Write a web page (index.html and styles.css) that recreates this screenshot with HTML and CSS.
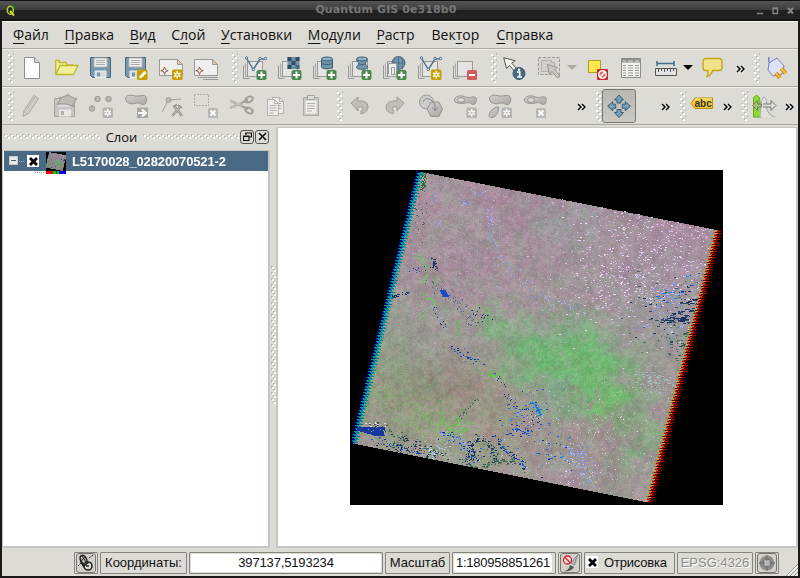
FILE: index.html
```html
<!DOCTYPE html>
<html lang="ru">
<head>
<meta charset="utf-8">
<title>Quantum GIS</title>
<link rel="stylesheet" href="styles.css">
</head>
<body>
<svg class="defs" width="0" height="0">
  <defs>
    <linearGradient id="gGray" x1="0" y1="0" x2="1" y2="1"><stop offset="0" stop-color="#d2d1ce"/><stop offset="1" stop-color="#a9a8a6"/></linearGradient>
    <symbol id="stack" viewBox="0 0 24 24" overflow="visible"><path d="M-.5 9.500v13h6" fill="none" stroke="#999"/><path d="M1.500 7.500v13h6" fill="none" stroke="#aaa"/><rect x="3.500" y="5.500" width="15" height="15" fill="#e4e4e2" stroke="#999"/></symbol>
    <symbol id="plus" viewBox="0 0 24 24" overflow="visible"><rect x="12.500" y="14" width="10" height="10" rx="2" fill="#4d8750"/><path d="M17.500 15.500v7M14 19h7" stroke="#fff" stroke-width="2"/></symbol>
    <symbol id="star" viewBox="0 0 24 24" overflow="visible"><rect x="12" y="13.500" width="10.500" height="10.500" rx="1.500" fill="#c6a000"/><path d="M17.200 15v7.500M14 17l6.500 3.700M14 20.700l6.500-3.700" stroke="#fff" stroke-width="1.500"/><circle cx="17.200" cy="18.800" r="1" fill="#c6a000"/></symbol>
    <symbol id="gstar" viewBox="0 0 24 24" overflow="visible"><rect x="12.500" y="13.500" width="10.500" height="10.500" rx="1.500" fill="#b5b4b2"/><path d="M17.700 15v7.500M14.500 17l6.500 3.700M14.500 20.700l6.500-3.700" stroke="#fff" stroke-width="1.500"/><circle cx="17.700" cy="18.800" r="1" fill="#b5b4b2"/></symbol>
    <symbol id="gx" viewBox="0 0 24 24" overflow="visible"><rect x="13" y="14" width="10" height="10" rx="1.500" fill="#b9b8b6"/><path d="M15.500 16.500l5 5m0-5l-5 5" stroke="#fff" stroke-width="1.800"/></symbol>
    <symbol id="vline" viewBox="0 0 24 24" overflow="visible"><path d="M3 3l6.300 10.500L16 3h5" fill="none" stroke="#4a6f8a" stroke-width="1.400"/><g fill="#e7eef2" stroke="#4a6f8a"><circle cx="2.500" cy="2" r="1.200"/><circle cx="9.300" cy="13.500" r="1.200"/><circle cx="16" cy="2.500" r="1.200"/><circle cx="21.500" cy="2.500" r="1.200"/></g></symbol>
    <symbol id="floppy" viewBox="0 0 24 24" overflow="visible"><path d="M.5 1.500h20v20h-18l-2-2z" fill="#7898ae" stroke="#4b687b"/><path d="M4 2h13v9H4z" fill="#f0f0ee" stroke="#b5b5b3"/><path d="M6 4.500h9M6 6.500h9M6 8.500h9" stroke="#aaa"/><path d="M5 15h11v6.500H5z" fill="#d5d9dc" stroke="#edf1f3"/><path d="M7 16.500h3v4H7z" fill="#7898ae"/></symbol>
    <symbol id="blob" viewBox="0 0 24 24" overflow="visible"><path d="M.5 5C0 2 4 .5 8 1.500s6 .5 9 0c5-.5 5.500 3 4 7-1 3-4 2.500-6 1s-5 .5-8 .3C3 9.500 1 8 .5 5z" fill="url(#gGray)" stroke="#969593"/></symbol>
    <symbol id="ring" viewBox="0 0 24 24" overflow="visible"><path d="M.5 6C1 2 6 1 10 2.500s5 1 8 .5c5-.8 5 2 3.500 6-1 2-3 2-5 .2s-6 .6-9 .3-7-.5-7-3.500z" fill="url(#gGray)" stroke="#969593"/><ellipse cx="7" cy="6" rx="3.500" ry="2.300" fill="#dcdbd6" stroke="#969593"/></symbol>
    <symbol id="more" viewBox="0 0 9 8"><path d="M1 1l3 3-3 3M5 1l3 3-3 3" fill="none" stroke="#fff" stroke-width="3" opacity=".6"/><path d="M1 1l3 3-3 3M5 1l3 3-3 3" fill="none" stroke="#000" stroke-width="1.500"/></symbol>
    <symbol id="page" viewBox="0 0 16 18" overflow="visible"><path d="M.5 .5h7l4 4v12H.5z" fill="#eeedeb" stroke="#b0afad"/><path d="M7.500 .5v4h4M2.500 6.500h7M2.500 9h7M2.500 11.500h7M2.500 14h4" fill="none" stroke="#b0afad"/></symbol>
  </defs>
</svg>
<div class="window">
  <header class="titlebar">
    <svg class="app-icon" width="11" height="14" viewBox="0 0 11 14"><path d="M5 3L9.500 0v3L7 5z" fill="#156b25"/><ellipse cx="4.300" cy="6.300" rx="3" ry="4" fill="#143816" stroke="#b8c32b" stroke-width="1.600"/><path d="M4 7l4 4.500" stroke="#d5d535" stroke-width="2"/></svg>
    <h1>Quantum GIS 0e318b0</h1>
    <svg class="win-buttons" width="38" height="8" viewBox="0 0 38 8"><path d="M0 6.500h6M16 1.500h4.500v5H16zM15.500 1h5.500" fill="none" stroke="#858585" stroke-width="1.400"/><path d="M31 1l5 5.500m0-5.500l-5 5.500" stroke="#858585" stroke-width="2"/></svg>
  </header>
  <nav class="menu">
    <a><u>Ф</u>айл</a><a><u>П</u>равка</a><a><u>В</u>ид</a><a>С<u>л</u>ой</a><a><u>У</u>становки</a><a><u>М</u>одули</a><a><u>Р</u>астр</a><a>Век<u>т</u>ор</a><a><u>С</u>правка</a>
  </nav>
  <div class="toolbar">
    <i class="grip"></i>
    <span class="tool"><svg><path d="M4.500 1.500h10l5 5v16h-15z" fill="#fcfcfc" stroke="#8e8e8c"/><path d="M14.500 1.500v5h5" fill="#dcdcda" stroke="#8e8e8c"/></svg></span>
    <span class="tool"><svg><path d="M.7 18.500v-14h3.500v2h7l.5 2.500h6v1.500" fill="#eded9a" stroke="#bdb82a" stroke-width="1.300"/><path d="M1 18.500l4-9h18l-4.500 9z" fill="#f0ef9e" stroke="#bdb82a" stroke-width="1.300"/></svg></span>
    <span class="tool"><svg><use href="#floppy"/></svg></span>
    <span class="tool"><svg><use href="#floppy"/><rect x="12" y="13.500" width="10.500" height="10.500" rx="1.500" fill="#c6a000"/><path d="M14 22.500l1-3 4.500-4.500 2 2-4.500 4.500z" fill="#fff"/></svg></span>
    <span class="tool"><svg><path d="M-.5 3.500h18l5 5v11h-23z" fill="#efefed" stroke="#999"/><path d="M17.500 3.500v5h5z" fill="#e7c7a6" stroke="#999"/><path d="M4.500 11l1 2.700 2.700 1-2.700 1-1 2.700-1-2.700-2.700-1 2.700-1z" fill="#fff" stroke="#995640"/><use href="#star"/></svg></span>
    <span class="tool"><svg><path d="M3 21.500h20M8 23.500h15" stroke="#999"/><path d="M-.5 3.500h18l5 5v11h-23z" fill="#efefed" stroke="#999"/><path d="M17.500 3.500v5h5z" fill="#e7c7a6" stroke="#999"/><path d="M4.500 11l1 2.700 2.700 1-2.700 1-1 2.700-1-2.700-2.700-1 2.700-1z" fill="#fff" stroke="#995640"/></svg></span>
    <i class="grip"></i>
    <span class="tool"><svg><use href="#stack"/><use href="#vline"/><use href="#plus"/></svg></span>
    <span class="tool"><svg><use href="#stack"/><path d="M8.500 1h12v12h-12z" fill="#6e94ab"/><path d="M8.500 1h4v4h-4zM16.500 1h4v4h-4zM12.500 5h4v4h-4zM8.500 9h4v4h-4z" fill="#2f4d63"/><path d="M16.500 9h4v4h-4z" fill="#47687e"/><use href="#plus"/></svg></span>
    <span class="tool"><svg><use href="#stack"/><path d="M7.500 3.500v7.500c0 2.500 11 2.500 11 0V3.500" fill="#6f94ab" stroke="#3f6074"/><ellipse cx="13" cy="3" rx="5.500" ry="2" fill="#8fb0c4" stroke="#3f6074"/><path d="M7.500 7c1 2 10 2 11 0" fill="none" stroke="#3f6074"/><use href="#plus"/></svg></span>
    <span class="tool"><svg><use href="#stack"/><path d="M7.500 3.500c0 2 2 2 2 4s-2 2-2 4c1 2.500 11 2.500 11 0 0-2-2-2-2-4s2-2 2-4" fill="#6f94ab" stroke="#3f6074"/><ellipse cx="13" cy="3" rx="5.500" ry="2" fill="#8fb0c4" stroke="#3f6074"/><path d="M9 7c1 2 7 2 8 0" fill="none" stroke="#3f6074"/><use href="#plus"/></svg></span>
    <span class="tool"><svg><use href="#stack"/><circle cx="14.500" cy="7" r="6.500" fill="#6f94ab" stroke="#4a6c80"/><path d="M8 7h13M14.500 .5v13M11.500 1.500c-2 4-2 7 0 11M17.500 1.500c2 4 2 7 0 11" fill="none" stroke="#4a6c80" stroke-width=".8"/><path d="M4.500 18.500v-11h8v11h-5v-7h3v7" fill="#eeeeec" stroke="#999"/><use href="#plus"/></svg></span>
    <span class="tool"><svg><use href="#stack"/><use href="#vline"/><use href="#star"/></svg></span>
    <span class="tool"><svg><use href="#stack"/><rect x="13" y="14" width="10" height="10" rx="1.500" fill="#d35c5c"/><path d="M15 19h6" stroke="#fff" stroke-width="2"/></svg></span>
    <i class="grip"></i>
    <span class="tool"><svg><path d="M.7 1.700l11.500 3-3.500 2.500 6 6.500-2.300 2.300-6-6.500L3.500 12.500z" fill="#f2f2f0" stroke="#555"/><circle cx="16" cy="17.500" r="6" fill="#486a84" stroke="#38546a"/><path d="M14 16h2.700v5M14 21h5" fill="none" stroke="#fff" stroke-width="1.700"/><circle cx="16" cy="13.800" r="1.200" fill="#fff"/></svg></span>
    <span class="tool"><svg><rect x=".5" y="1.500" width="21" height="17" fill="#d7d6d3" stroke="#999" stroke-dasharray="3 1.500"/><path d="M3.500 4.500h10v2h3v9h-13z" fill="#d1d0cc" stroke="#b1b0ae"/><path d="M9.500 8.500l10 3-3 2 5.500 6.500-2.500 2-5.500-6.500-2.500 3z" fill="#c9c8c6" stroke="#959492"/></svg></span>
    <span class="drop drop-off"></span>
    <span class="tool"><svg><path d="M2.500 4.500h12v12h-12z" fill="#ffe64e" stroke="#ad9b24"/><rect x="11" y="13" width="11" height="11" rx="1" fill="#c7282d"/><circle cx="16.500" cy="18.500" r="3.800" fill="#e26b6e" stroke="#fff" stroke-width="1.500"/><path d="M14 21l5-5" stroke="#fff" stroke-width="1.500"/></svg></span>
    <span class="tool"><svg><path d="M.5 2.500h19v19H.5z" fill="#f1f1ef" stroke="#8c8c8a"/><path d="M1 3h18v3.500H1z" fill="#8f8f8d"/><path d="M2 5h3m2 0h5m2 0h4" stroke="#ddd"/><path d="M2 9.500h3m2 0h5m2 0h4M2 12h3m2 0h5m2 0h4M2 14.500h3m2 0h5m2 0h4M2 17h3m2 0h5m2 0h4M2 19.500h3m2 0h5m2 0h4" stroke="#999"/></svg></span>
    <span class="tool"><svg><path d="M1 7.500h17M1 5v5M18 5v5" stroke="#3f6c88" stroke-width="1.500" fill="none"/><path d="M-.5 12.500h21v7h-21z" fill="#e4e4e2" stroke="#555"/><path d="M2.500 13v3m3-3v2m3-2v3m3-3v2m3-2v3m3-3v2" stroke="#555"/></svg></span>
    <span class="drop drop-on"></span>
    <span class="tool"><svg><path d="M4 2.500h14q3 0 3 3v6q0 3-3 3h-6.500Q10 20 6 20.500q1.500-2 1-6H5q-3 0-3-3v-6q0-3 3-3z" fill="#f0e289" stroke="#bfa317" stroke-width="1.300"/></svg></span>
    <span class="more more-a"><svg><use href="#more"/></svg></span>
    <i class="grip grip-a"></i>
    <span class="tool"><svg><path d="M4 8q-2-3-1-7" fill="none" stroke="#7785cd" stroke-width="1.500"/><path d="M3 7l8-5 7 8-2 8-9 2-5-6z" fill="#dfe2fb" stroke="#7380bd"/><path d="M10 17l4 5M15.500 12.500l4 5" stroke="#dc8900" stroke-width="4"/><path d="M10 17l4 5M15.500 12.500l4 5" stroke="#ffc43e" stroke-width="2"/></svg></span>
  </div>
  <div class="toolbar">
    <i class="grip"></i>
    <span class="tool"><svg><path d="M3 22.500l1-6L14 1.500l4.500 3-10 15z" fill="#cecdca" stroke="#aaa9a7"/><path d="M4 17l4 3M7 15l8-12" stroke="#b3b2b0"/></svg></span>
    <span class="tool"><svg><path d="M-.5 4.500h20v18h-20z" fill="#c7c6c4" stroke="#a3a2a0"/><path d="M3 5h12v8H3z" fill="#dedddb"/><path d="M4 15.500h12v7H4z" fill="#e8e7e5"/><path d="M6 17h3v4H6z" fill="#b0afad"/><path d="M3 10l2-6 8-3 8 4-3 7q-7-3-15-2z" fill="#bcbbb8" stroke="#969593"/><g fill="#ccc" stroke="#969593" stroke-width=".8"><circle cx="3" cy="10" r="1"/><circle cx="5" cy="4" r="1"/><circle cx="13" cy="1" r="1"/><circle cx="21" cy="5" r="1"/><circle cx="18" cy="12" r="1"/></g></svg></span>
    <span class="tool"><svg><g fill="#b9b8b6" stroke="#999896"><circle cx="7.500" cy="5" r="2.700"/><circle cx="18.500" cy="5" r="2.700"/><circle cx="2" cy="14.500" r="2.700"/></g><use href="#gstar"/></svg></span>
    <span class="tool"><svg><use href="#blob"/><rect x="12" y="13.500" width="11" height="10.500" fill="#a8a7a5"/><path d="M13 19h6M17 15.500l4 3.500-4 3.500" fill="none" stroke="#fff" stroke-width="2"/></svg></span>
    <span class="tool"><svg><path d="M2 18L8.500 6 21 5" fill="none" stroke="#a1a09e"/><circle cx="8.500" cy="6" r="2.500" fill="#b9b8b6" stroke="#a1a09e"/><path d="M12 22l8-9M14 12l8 10" stroke="#8f8e8c" stroke-width="2.600"/><path d="M12 22l8-9M14 12l8 10" stroke="#c7c6c4" stroke-width="1"/><path d="M13 13l4-2.500M18 11l4 3" stroke="#999" stroke-width="2"/></svg></span>
    <span class="tool"><svg><rect x="-.5" y=".5" width="14" height="11" fill="none" stroke="#8d8c8a" stroke-dasharray="1.200 1.800"/><use href="#gx"/></svg></span>
    <span class="tool"><svg><path d="M0 6.500l18 8.500M0 14l18-8" stroke="#a09f9d" stroke-width="2"/><path d="M0 6.500l12 5.500M0 14l12-5.500" stroke="#ccc"/><g fill="none" stroke="#9d9c9a" stroke-width="1.800"><ellipse cx="19" cy="5.500" rx="4" ry="2.500" transform="rotate(-30 19 5.500)"/><ellipse cx="19" cy="16.500" rx="4" ry="2.500" transform="rotate(30 19 16.500)"/></g></svg></span>
    <span class="tool"><svg><use href="#page" x="7" y="3" width="16" height="18"/><use href="#page" x="2" y="5" width="16" height="18"/></svg></span>
    <span class="tool"><svg><path d="M3.500 3.500h15v18h-15z" fill="#c8c7c4" stroke="#a9a8a6"/><path d="M5.500 6.500h11v13h-11z" fill="#f0efed"/><path d="M7.500 1.500h7v4h-7z" fill="#dddcda" stroke="#a3a2a0"/><path d="M7 9.500h8M7 12h8M7 14.500h8M7 17h5" stroke="#b0afad"/></svg></span>
    <i class="grip"></i>
    <span class="tool"><svg><path d="M2 9l7-6v4q10-1 10 6 0 5-7 7-1-3 2-5 0-3-5-2v4z" fill="#bfbebb" stroke="#9c9b99"/></svg></span>
    <span class="tool"><svg><path d="M20 9l-7-6v4q-10-1-11 6 0 5 7 7 2-3-1-5 0-3 5-2v4z" fill="#bfbebb" stroke="#9c9b99"/></svg></span>
    <span class="tool"><svg><circle cx="7.500" cy="8" r="7" fill="#ccc" stroke="#999896"/><path d="M8 15l4-7h8l3.500 7-3.500 7.500h-8z" fill="url(#gGray)" stroke="#959492"/><path d="M4 8q2-5 7-2.500t5 6v5m-2.500-3l2.500 3.500 2.500-3.500" fill="none" stroke="#888"/></svg></span>
    <span class="tool"><svg><use href="#ring"/><use href="#gstar"/></svg></span>
    <span class="tool"><svg><use href="#blob"/><path d="M0 21q1-4 4-6 4-3 6-2-1 8-5 10-5 2-5-2z" fill="url(#gGray)" stroke="#969593"/><use href="#gstar"/></svg></span>
    <span class="tool"><svg><use href="#ring"/><use href="#gx" x="-1"/></svg></span>
    <span class="more more-b"><svg><use href="#more"/></svg></span>
    <i class="grip grip-b"></i>
    <span class="tool pressed"><svg viewBox="0 0 24 24"><g fill="#789fb9" stroke="#365d77" stroke-linejoin="round"><path d="M12 1l4.500 5H14v3h-4V6H7.500z"/><path d="M12 23.500l4.500-5H14v-3h-4v3H7.500z"/><path d="M.7 12.200l5-4.500v2.500h3v4h-3v2.500z"/><path d="M23.300 12.200l-5-4.500v2.500h-3v4h3v2.500z"/></g></svg></span>
    <span class="more more-c"><svg><use href="#more"/></svg></span>
    <i class="grip grip-b"></i>
    <span class="tool tag-tool"><svg><path d="M-1 9.500l4-5.500h17.500v10.500H3z" fill="#f3cc33" stroke="#ba9200"/><path d="M3 5h17" stroke="#fff09a"/><text x="2.500" y="12.500" class="tag">abc</text></svg></span>
    <span class="more more-d"><svg><use href="#more"/></svg></span>
    <i class="grip grip-b"></i>
    <span class="tool"><svg><path d="M-.5 23V4q3-5 6 0l2 19z" fill="#8adc2c" stroke="#62a923"/><path d="M12 14q4 8 10 9H7z" fill="#8adc2c"/><path d="M6 23q1-21 4-20t3 13q2 5 7 7" fill="#e0e0de" stroke="#aaa"/><path d="M-1.500 11.500l5-5v3.500h4v3h-4v3.500z" fill="#9fca6a" stroke="#777"/><path d="M9 10h8V6.500l5 5-5 5V13H9" fill="#dededc" stroke="#777"/></svg></span>
    <span class="more more-e"><svg><use href="#more"/></svg></span>
  </div>
  <main class="workspace">
    <aside class="dock">
      <div class="dock-title"><i class="hgrip"></i><h2>Слои</h2><i class="hgrip"></i>
        <span class="dock-button"><svg width="9" height="9" viewBox="0 0 9 9"><path d="M3 3V1h5.500v4H6M2 1h7M.5 4h5.500v4.500H.5zM0 4.500h6" fill="none" stroke="#111" stroke-width="1.200"/></svg></span>
        <span class="dock-button"><svg width="9" height="9" viewBox="0 0 9 9"><path d="M1 1l7 7m0-7L1 8" stroke="#111" stroke-width="1.700"/></svg></span>
      </div>
      <div class="tree">
        <div class="layer"><i class="expander"></i><i class="branch"></i><span class="check"><svg width="9" height="9" viewBox="0 0 9 9"><path d="M1 1l7 7m0-7L1 8" stroke="#000" stroke-width="2.800"/></svg></span><canvas class="thumb" id="thumb" width="20" height="19"></canvas><b>L5170028_02820070521-2</b></div>
        <div class="bands"><i class="band-line"></i><i class="band red"></i><i class="band green"></i><i class="band blue"></i></div>
      </div>
    </aside>
    <div class="splitter"><i class="vgrip"></i></div>
    <section class="view"><canvas id="map" width="373" height="335"></canvas></section>
  </main>
  <footer class="status">
    <div class="cell button"><span><svg width="18" height="18" viewBox="0 0 18 18"><path d="M1 12L5 8M12 4l4-3" stroke="#222" stroke-dasharray="2 1"/><ellipse cx="6.500" cy="5.500" rx="3" ry="4.500" transform="rotate(-30 6.500 5.500)" fill="#bbb" stroke="#222" stroke-width="1.500"/><path d="M3 8l5-5M5 2l4 6" stroke="#222"/><circle cx="11" cy="12" r="4" fill="#ddd" stroke="#222" stroke-width="1.600"/><path d="M7 12l5-4M9 12h3M4 8l3 5" stroke="#222" stroke-width="1.600"/></svg></span></div>
    <div class="cell coord-label">Координаты:</div>
    <div class="cell coord"><span class="field">397137,5193234</span></div>
    <div class="cell scale-label">Масштаб</div>
    <div class="cell scale"><span class="field">1:180958851261</span></div>
    <div class="cell button"><span><svg width="18" height="18" viewBox="0 0 18 18"><path d="M16.500 1l-3 10-3.500-2z" fill="#bbb" stroke="#888"/><path d="M2 17q6 0 7-6l4 2q-2 5-11 4z" fill="#555"/><circle cx="6.500" cy="6" r="4" fill="#f4dede" stroke="#d62028" stroke-width="1.300"/><path d="M4 3.500l5 5" stroke="#d62028" stroke-width="1.300"/></svg></span></div>
    <div class="cell render"><span class="check"><svg width="9" height="9" viewBox="0 0 9 9"><path d="M1 1l7 7m0-7L1 8" stroke="#000" stroke-width="2.800"/></svg></span>Отрисовка</div>
    <div class="cell epsg">EPSG:4326</div>
    <div class="cell button"><span><svg width="18" height="18" viewBox="0 0 18 18"><circle cx="9" cy="9" r="7.500" fill="#8d8d8b"/><circle cx="9" cy="9" r="4" fill="#aaa" stroke="#777" stroke-width="1.500"/><path d="M9 1v16M1 9h16" stroke="#747472" stroke-width="1.300"/><path d="M6.500 6.500h5v5h-5z" fill="#b8b8b6"/></svg></span></div>
    <svg class="resize" width="12" height="12" viewBox="0 0 12 12"><path d="M0 12L12 0M4 12l8-8M8 12l4-4" stroke="#999"/><path d="M1.500 12L12 1.500M5.500 12L12 5.500M9.500 12l2.500-2.500" stroke="#fff"/></svg>
  </footer>
</div>
<script src="scene.js"></script>
</body>
</html>
```

FILE: styles.css
```css
* { box-sizing: border-box; }
body { margin: 0; background: #1a1718; color: #111; font: 14px "Open Sans", "Noto Sans", sans-serif; overflow: hidden; }
h1, h2 { margin: 0; }
i { display: block; flex: none; }
.defs { position: absolute; }
.window { width: 800px; height: 578px; display: flex; flex-direction: column; border: solid #1a1718; border-width: 0 2px 2px; background: #dcdbd5; }
.titlebar { height: 21px; flex: none; display: flex; align-items: center; margin: 0 -2px; background: linear-gradient(#111 0 1px, #545455 1px, #3c3c3d 10px, #202020 10px, #222 19px, #141414 19px); }
.app-icon { margin-left: 6px; }
.titlebar h1 { flex: 1; font: bold 11px "DejaVu Sans", sans-serif; letter-spacing: .1px; color: #777; text-align: center; padding: 0 2px 2px 0; }
.win-buttons { margin-right: 5px; }
.menu { height: 28px; flex: none; display: flex; gap: 15.600px; padding: 3px 0 0 11px; border-bottom: 1px solid #aaa9a4; border-top: 1px solid #f3f2ee; line-height: 19px; font-size: 14px; color: #111; }
.menu a:nth-child(8), .menu a:nth-child(9) { margin-left: 1.500px; }
.menu u { text-decoration-thickness: 1px; text-underline-offset: 3px; text-decoration-skip-ink: none; }
.toolbar { height: 38px; flex: none; display: flex; align-items: center; border-top: 1px solid #eeede9; border-bottom: 1px solid #aaa9a4; }
.grip { width: 6px; height: 30px; margin-left: 8px; background: conic-gradient(from 270deg at 2px 2px, #fff 90deg, transparent 0) 0 1px / 6px 6px, conic-gradient(from 270deg at 2px 2px, #fff 90deg, transparent 0) 3px 4px / 6px 6px, conic-gradient(from 270deg at 2px 2px, #bbbab6 90deg, transparent 0) -1px 0 / 6px 6px, conic-gradient(from 270deg at 2px 2px, #bbbab6 90deg, transparent 0) 2px 3px / 6px 6px; }
.toolbar > .grip:first-child { margin-left: 6px; }
.toolbar > .grip-b { margin-left: 10px; }
.toolbar > .grip-a { margin-left: 9px; }
.tool { width: 35px; height: 34px; flex: none; padding: 5px 0 0 6px; }
.tool svg { display: block; width: 24px; height: 24px; overflow: visible; }
.drop { flex: none; width: 13px; height: 6px; }
.drop::before { content: ""; display: block; width: 0; border: 5px solid transparent; border-bottom: 0; }
.drop-off::before { border-top-color: #aaa9a7; }
.drop-on { width: 10px; }
.drop-on::before { border-top-color: #000; margin-left: -2px; }
.more { flex: none; width: 9px; }
.more svg { display: block; width: 9px; height: 8px; margin-top: 1px; }
.more-a { margin-left: 6px; }
.more-b { margin-left: 24px; }
.more-c { margin-left: 25px; }
.more-d { margin-left: 2px; }
.more-e { margin-left: 2px; }
.pressed { width: 34px; padding: 4px; border: 1px solid #777674; border-radius: 3px; background: linear-gradient(#b8b7b2, #cac9c4); }
.tag { font: bold 10px "Liberation Sans", sans-serif; fill: #333; }
.workspace { flex: 1; min-height: 0; display: flex; padding-top: 2px; }
.dock { width: 268px; flex: none; display: flex; flex-direction: column; }
.dock-title { height: 23px; flex: none; display: flex; align-items: center; padding: 0 0 4px 2px; }
.dock-title h2 { font-size: 13px; font-weight: 400; width: 43px; text-align: center; line-height: 18px; }
.hgrip { width: 96px; height: 6px; background: conic-gradient(from 270deg at 2px 2px, #fff 90deg, transparent 0) 1px 1px / 6px 6px, conic-gradient(from 270deg at 2px 2px, #fff 90deg, transparent 0) 4px 3px / 6px 6px, conic-gradient(from 270deg at 2px 2px, #bbbab6 90deg, transparent 0) 0 0 / 6px 6px, conic-gradient(from 270deg at 2px 2px, #bbbab6 90deg, transparent 0) 3px 2px / 6px 6px; }
.dock-button { width: 14px; height: 14px; margin-left: 1px; border: 1px solid #555; border-radius: 3px; display: grid; place-items: center; }
.tree { flex: 1; background: #fff; border: solid #c6c5c1; border-width: 1px 2px 2px 1px; }
.layer { height: 20px; margin-left: 1px; display: flex; align-items: center; background: #4a6984; color: #fff; font: 13px "Liberation Sans", sans-serif; }
.layer b { letter-spacing: -.14px; margin-left: 6px; }
.expander { width: 9px; height: 9px; margin: 0 0 2px 5px; background: linear-gradient(#555, #555) center / 5px 1px no-repeat, #e9e9e7; border: 1px solid #c8c7c3; }
.branch { width: 5px; height: 1px; margin-left: 1px; background: repeating-linear-gradient(90deg, #aaa 0 1px, transparent 1px 2px); }
.check { display: grid; place-items: center; flex: none; width: 12px; height: 12px; background: #fff; }
.layer .check { margin-left: 3px; }
.thumb { margin-left: 7px; flex: none; }
.bands { height: 4px; display: flex; padding-left: 32px; }
.band { height: 3px; width: 7px; }
.band-line { width: 9px; margin: 1px 2px 0 0; height: 1px; background: repeating-linear-gradient(90deg, #999 0 1px, transparent 1px 2px); }
.red { background: #f00; }
.green { background: linear-gradient(90deg, #0c0 0 3px, #040 3px 4px, #0c0 4px); width: 6px; }
.blue { background: #00f; }
.splitter { width: 6px; display: flex; justify-content: center; padding-top: 139px; }
.vgrip { width: 6px; height: 138px; background: conic-gradient(from 270deg at 2px 2px, #fff 90deg, transparent 0) 2px 1px / 6px 6px, conic-gradient(from 270deg at 2px 2px, #fff 90deg, transparent 0) 4px 4px / 6px 6px, conic-gradient(from 270deg at 2px 2px, #bbbab6 90deg, transparent 0) 1px 0 / 6px 6px, conic-gradient(from 270deg at 2px 2px, #bbbab6 90deg, transparent 0) 3px 3px / 6px 6px; }
.view { flex: 1; display: grid; place-items: center; padding-right: 2px; background: #fff; border: solid #c6c5c1; border-width: 1px 2px 2px; }
.view canvas { display: block; }
.status { height: 28px; flex: none; display: flex; gap: 2px; padding: 4px 0 2px 72px; font: 13px "Liberation Sans", sans-serif; }
.cell { height: 22px; flex: none; border: 1px solid #85847f; border-radius: 1px; display: flex; align-items: center; justify-content: center; white-space: nowrap; padding-bottom: 1px; }
.button { width: 24px; padding: 0; }
.button span { width: 20px; height: 20px; border: 1px solid #777672; border-radius: 3px; display: grid; place-items: center; background: #d2d1cb; }
.coord-label { width: 87px; }
.coord { width: 194px; padding: 0 1px; letter-spacing: -.15px; }
.field { flex: 1; height: 18px; line-height: 18px; text-align: center; background: #fff; border-radius: 2px; overflow: hidden; }
.scale-label { width: 65px; }
.scale { width: 104px; padding: 0 3px 0 1px; letter-spacing: -.25px; }
.render { width: 91px; gap: 6px; justify-content: flex-start; padding: 0 0 2px 1px; letter-spacing: -.2px; }
.epsg { width: 76px; color: #8d8c88; text-shadow: 1px 1px #fff; }
.resize { margin: 12px 0 0 auto; flex: none; }
```

FILE: scene.js
```javascript
const map = document.getElementById('map');
const ctx = map.getContext('2d');
const W = map.width, H = map.height;
let seed = 5170028;
const rnd = () => {
  seed = (seed + 0x6D2B79F5) | 0;
  let t = Math.imul(seed ^ (seed >>> 15), 1 | seed);
  t = (t + Math.imul(t ^ (t >>> 7), 61 | t)) ^ t;
  return ((t ^ (t >>> 14)) >>> 0) / 4294967296;
};

// Smooth value noise on a lattice of the given cell size.
function noise(size) {
  const cols = Math.ceil(W / size) + 2, rows = Math.ceil(H / size) + 2;
  const grid = Array.from({ length: cols * rows }, () => rnd() * 2 - 1);
  return (x, y) => {
    const gx = x / size, gy = y / size, ix = Math.floor(gx), iy = Math.floor(gy);
    const s = v => v * v * (3 - 2 * v), fx = s(gx - ix), fy = s(gy - iy), k = iy * cols + ix;
    const a = grid[k] + (grid[k + 1] - grid[k]) * fx;
    const b = grid[k + cols] + (grid[k + cols + 1] - grid[k + cols]) * fx;
    return a + (b - a) * fy;
  };
}
const n3 = noise(3), n8 = noise(8), n20 = noise(20), h5 = noise(5), h14 = noise(14), h35 = noise(35);
const wxa = noise(16), wya = noise(16), wxb = noise(5), wyb = noise(5);

// Tint regions: x, y, radius x, radius y, colour, strength.
const tints = [
  [225, 30, 150, 70, [164, 142, 156], .8], [100, 75, 70, 90, [162, 143, 153], .7],
  [320, 95, 60, 50, [164, 144, 162], .7], [210, 55, 24, 14, [151, 156, 156], .6],
  [240, 48, 14, 10, [152, 163, 167], .5], [330, 150, 40, 28, [152, 154, 164], .6],
  [45, 180, 40, 45, [145, 152, 139], .8], [50, 225, 60, 45, [143, 155, 125], .9],
  [120, 215, 45, 32, [153, 139, 129], .9], [100, 255, 45, 25, [143, 160, 120], .7],
  [205, 182, 52, 30, [116, 178, 120], 1.1], [236, 205, 45, 33, [114, 186, 116], 1.2],
  [262, 238, 32, 16, [112, 192, 108], 1.1], [282, 255, 14, 10, [122, 180, 115], .8],
  [275, 285, 18, 45, [138, 160, 133], .8],
  [212, 220, 22, 14, [126, 163, 145], .7], [165, 205, 14, 14, [134, 165, 130], .6],
  [143, 156, 12, 12, [124, 176, 124], .9], [235, 224, 9, 6, [154, 142, 134], .8],
  [218, 192, 10, 5, [150, 150, 138], .6],
  [305, 218, 25, 30, [154, 147, 146], .7], [235, 270, 40, 18, [160, 148, 143], .7],
  [250, 295, 35, 22, [158, 147, 147], .6], [290, 278, 10, 16, [125, 173, 125], .6],
  [190, 275, 50, 30, [162, 153, 149], .6], [120, 285, 50, 18, [148, 159, 135], .7],
  [150, 255, 28, 22, [160, 148, 135], .7]
];
const img = ctx.createImageData(W, H), d = img.data;
const put = (x, y, c) => {
  x |= 0; y |= 0;
  if (x < 0 || y < 0 || x >= W || y >= H) return;
  const k = (y * W + x) * 4;
  d[k] = c[0]; d[k + 1] = c[1]; d[k + 2] = c[2]; d[k + 3] = 255;
};
const leftAt = y => 65.5 - (y - 1) * .243;
const rightAt = y => 370 - (y - 60) * .2535;
const topAt = x => 1 + (x - 68) * .196;
const bottomAt = x => 272.500 + x * .2;
const inside = (x, y) => x > leftAt(y) + 7 && x < rightAt(y) - 5 && y > topAt(x) && y < bottomAt(x);

for (let y = 0; y < H; y++) {
  for (let x = 0; x < W; x++) {
    const jag = (y % 3) * 1.5, l = leftAt(y) - 1 + jag, r = rightAt(y) + 2 - jag;
    let c = [0, 0, 0];
    if (y > topAt(x) && y < bottomAt(x)) {
      if (x >= l && x < l + 2) c = [0, 0, y % 3 ? 165 : 50];
      else if (x >= l + 2 && x < l + 6) c = y % 2 ? [0, 160, 160] : [0, 130, 130];
      else if (x >= l + 6 && x < r - 6) {
        let r0 = 162, g0 = 151, b0 = 153;
        const wx = x + wxa(x, y) * 16 + wxb(x, y) * 9, wy = y + wya(x, y) * 12 + wyb(x, y) * 8;
        for (const [cx, cy, rx, ry, t, s] of tints) {
          const q = ((wx - cx) / rx) ** 2 + ((wy - cy) / ry) ** 2;
          if (q > 5) continue;
          const a = Math.min(1, Math.exp(-q) * s);
          r0 += (t[0] - r0) * a; g0 += (t[1] - g0) * a; b0 += (t[2] - b0) * a;
        }
        const lum = n3(x, y) * 8 + n8(x, y) * 6 + n20(x, y) * 3 + (rnd() - .5) * 16;
        const hue = h5(x, y) * 4 + h14(x, y) * 4 + h35(x, y) * 2;
        c = [r0 + lum - hue, g0 + lum + hue, b0 + lum - hue * .4 + (rnd() - .5) * 10];
      } else if (x >= r - 6 && x < r - 4) c = y % 2 ? [185, 170, 20] : [160, 110, 60];
      else if (x >= r - 4 && x < r) c = y % 2 ? [185, 0, 0] : [95, 0, 0];
    }
    put(x, y, c);
  }
}

// Scattered specks: centre, spread, count, palette, run length.
function specks(cx, cy, sx, sy, count, colours, run = 1) {
  for (let i = 0; i < count; i++) {
    const x = cx + (rnd() + rnd() + rnd() - 1.5) * sx, y = cy + (rnd() + rnd() + rnd() - 1.5) * sy;
    const c = colours[Math.floor(rnd() * colours.length)], len = 1 + Math.floor(rnd() * run);
    for (let j = 0; j < len; j++) if (inside(x + j, y)) put(x + j, y, c);
  }
}
// Specks strewn along a broken line.
function trail(points, spread, density, colours, run = 1) {
  for (let i = 1; i < points.length; i++) {
    const [ax, ay] = points[i - 1], [bx, by] = points[i], n = Math.hypot(bx - ax, by - ay) * density;
    for (let j = 0; j < n; j++) {
      const t = rnd();
      specks(ax + (bx - ax) * t, ay + (by - ay) * t, spread, spread, 1, colours, run);
    }
  }
}
const white = [[215, 190, 230], [238, 215, 250], [195, 178, 212], [225, 195, 240]];
const pale = [[145, 160, 235], [175, 185, 240], [120, 145, 230]];
const blue = [[25, 75, 200], [35, 100, 220], [20, 50, 150]];
const navy = [[25, 50, 100], [30, 50, 95], [60, 85, 115]];
const lime = [[75, 225, 55], [95, 205, 75], [100, 180, 85]];
const cyan = [[0, 140, 240], [20, 110, 220]];
const pine = [[55, 100, 75], [75, 120, 85], [50, 80, 85]];

specks(305, 80, 90, 80, 800, white, 2);
specks(280, 115, 60, 30, 160, white, 2);
specks(215, 75, 190, 100, 480, [[190, 165, 205], [182, 165, 195], [175, 160, 180]], 2);
specks(90, 60, 70, 110, 220, [[188, 163, 205], [180, 160, 200]]);
specks(225, 290, 85, 50, 160, white);
trail([[139, 30], [142, 65], [146, 85]], 4, 1.1, pale);
trail([[146, 85], [160, 98], [175, 115], [196, 135]], 9, .8, pale);
trail([[125, 18], [132, 26]], 7, 2, pale);
specks(115, 34, 4, 4, 22, pale); specks(86, 30, 4, 6, 14, pale); specks(88, 53, 5, 4, 12, pale);
trail([[192, 122], [208, 134], [230, 139]], 5, .9, pale);
trail([[74, 5], [73, 19]], 3, 5, [[35, 120, 50], [50, 110, 65]]);
specks(69, 42, 6, 26, 22, pine);
trail([[67, 87], [76, 93], [77, 104]], 4, 1.8, lime);
trail([[87, 106], [85, 116]], 3, 1.8, lime);
trail([[70, 115], [76, 107]], 3, 1.5, lime);
specks(85, 95, 4, 8, 28, navy, 2);
specks(66, 99, 8, 4, 12, blue);
trail([[80, 112], [91, 120], [105, 128], [118, 145], [125, 157]], 6, 1.2, [[92, 105, 145], [95, 110, 125], [80, 95, 160]]);
for (let y = 120; y < 127; y++) for (let x = 90 + (y - 120) * .6; x < 96 + (y - 120) * .5; x++) put(x, y, blue[0]);
trail([[40, 127], [46, 126]], 1, 3, navy, 3);
trail([[48, 124], [60, 123]], 1, .7, navy, 2);
trail([[72, 125], [84, 133]], 4, 1.8, lime);
specks(72, 145, 5, 10, 20, lime);
trail([[84, 135], [89, 145], [98, 160]], 4, .9, [...pale, ...navy]);
trail([[108, 150], [108, 166]], 3, 1.6, lime);
specks(139, 138, 20, 5, 30, lime);
specks(131, 146, 10, 8, 20, navy);
specks(330, 142, 50, 38, 130, [...pine, ...navy, ...pale], 3);
trail([[318, 147], [335, 142], [347, 139]], 3, 1, navy, 5);
trail([[306, 152], [325, 151], [343, 146]], 3, 1, navy, 5);
trail([[305, 130], [352, 115]], 12, 1.2, [...cyan, ...navy, ...pale], 4);
trail([[330, 134], [350, 130]], 4, 1, navy, 4);
specks(338, 178, 18, 24, 70, pine, 3);
trail([[100, 178], [120, 188], [130, 190]], 5, .8, blue, 2);
trail([[141, 202], [149, 209], [156, 222], [166, 235], [190, 250]], 5, .8, [...pale, ...navy]);
specks(143, 204, 9, 4, 30, lime, 2);
trail([[182, 232], [191, 244]], 3, 2.2, cyan, 2);
specks(172, 245, 22, 30, 55, [...blue, ...cyan], 2);
specks(173, 262, 15, 5, 26, blue, 3);
specks(60, 245, 65, 35, 130, lime);
trail([[40, 275], [120, 292]], 4, .8, pine, 2);
trail([[68, 240], [105, 258], [112, 262]], 9, .7, lime, 2);
specks(107, 258, 15, 10, 34, lime, 2);
trail([[108, 250], [126, 230]], 2, .8, pine);
trail([[90, 263], [103, 267], [120, 280]], 6, 2, [...pale, ...blue], 2);
trail([[118, 289], [123, 272], [130, 268]], 4, 1.6, navy, 2);
trail([[130, 268], [142, 278], [147, 293]], 4, 1.8, [...pine, ...navy], 2);
trail([[145, 266], [155, 280], [172, 290], [173, 300]], 4, 1.4, [...blue, ...navy], 2);
trail([[115, 295], [130, 300], [145, 292], [165, 292]], 3, 1.2, pine, 3);
specks(124, 286, 8, 8, 45, [...navy, ...blue], 2);
for (let y = 257; y < 266; y++) for (let x = 7 + Math.max(0, y - 260) * 3.500; x < 33 + rnd() * 2; x++) if (rnd() < .96) put(x, y, [20, 55, 160]);
specks(24, 255, 12, 3, 24, [[95, 65, 85], [215, 220, 235]], 2);
trail([[34, 261], [62, 273], [85, 283]], 5, 1.2, [...navy, ...pine], 2);
trail([[24, 271], [50, 278], [76, 288]], 5, 1.1, [...blue, ...navy], 2);
specks(85, 281, 16, 8, 60, [[170, 185, 200], [175, 180, 225], [190, 205, 200]], 2);
specks(227, 285, 16, 12, 70, pale, 2);
specks(235, 303, 15, 16, 55, pale, 2);
specks(203, 280, 18, 22, 34, [...cyan, ...blue], 2);
specks(305, 213, 20, 14, 90, [[160, 182, 178], [165, 185, 190]], 3);
specks(240, 255, 90, 50, 80, white);
ctx.putImageData(img, 0, 0);

const small = document.getElementById('thumb').getContext('2d');
small.fillStyle = '#2c3c4a';
small.fillRect(0, 0, 20, 19);
small.globalAlpha = .85;
small.drawImage(map, 15, 0, W - 30, H, 0, 0, 20, 19);
```
